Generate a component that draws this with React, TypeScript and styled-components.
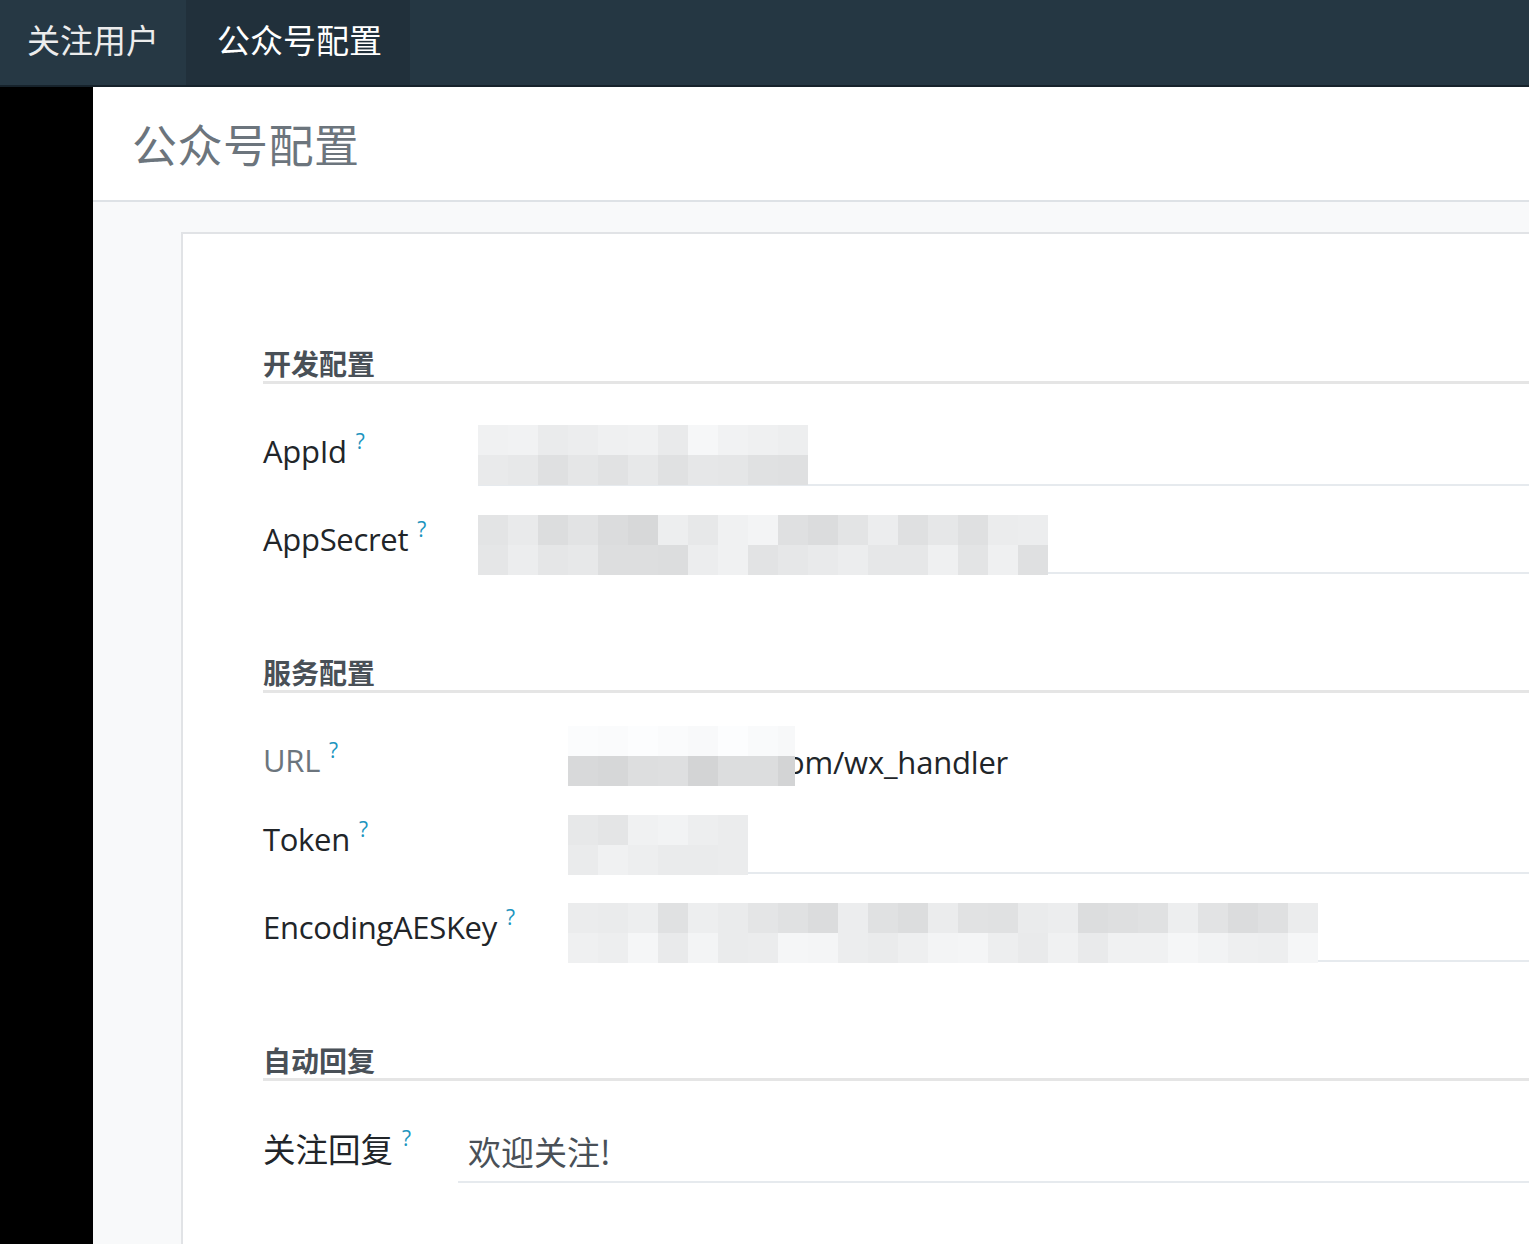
import React from "react";
import styled, { createGlobalStyle } from "styled-components";

const GlobalStyle = createGlobalStyle`
  html, body {
    margin: 0;
    padding: 0;
    overflow: hidden;
    background: #000;
  }
  body {
    font-family: "Open Sans", "Noto Sans CJK SC", sans-serif;
  }
  * { box-sizing: border-box; }
`;

const Page = styled.div`
  width: 1529px;
  height: 1244px;
  display: flex;
  flex-direction: column;
  overflow: hidden;
`;

const NavBar = styled.nav`
  height: 87px;
  flex: none;
  display: flex;
  background: #253743;
  border-bottom: 2px solid #16222b;
`;

const NavItem = styled.div<{ $active?: boolean }>`
  display: flex;
  align-items: center;
  padding: 0 ${(p) => (p.$active ? "28px" : "27px")} 8px
    ${(p) => (p.$active ? "31px" : "27px")};
  background: ${(p) => (p.$active ? "#21303b" : "#263844")};
  color: ${(p) => (p.$active ? "#ffffff" : "#ececec")};
  font-family: "Noto Sans CJK SC", sans-serif;
  font-size: 33px;
`;

const Body = styled.div`
  flex: 1;
  display: flex;
  min-height: 0;
`;

const Sidebar = styled.aside`
  width: 93px;
  flex: none;
  background: #000;
`;

const Main = styled.main`
  flex: 1;
  display: flex;
  flex-direction: column;
  background: #f8f9fa;
  min-width: 0;
`;

const Header = styled.header`
  height: 115px;
  flex: none;
  background: #fff;
  border-bottom: 2px solid #dee2e6;
  display: flex;
  align-items: center;
  padding: 0 0 0 39px;
`;

const Title = styled.h1`
  margin: 0;
  font-family: "Noto Sans CJK SC", sans-serif;
  font-weight: 400;
  font-size: 45px;
  color: #6c757d;
  letter-spacing: 0.5px;
`;

const Content = styled.div`
  flex: 1;
  padding: 30px 0 0 88px;
`;

const Card = styled.div`
  background: #fff;
  border: 2px solid #e1e3e6;
  margin-right: -60px;
  height: 1100px;
  padding: 111px 0 0 80px;
  display: flex;
  flex-direction: column;
`;

const Section = styled.section<{ $top: number }>`
  margin-top: ${(p) => p.$top}px;
  display: flex;
  flex-direction: column;
  gap: 26px;
`;

const SectionTitle = styled.h2`
  margin: 0 0 14px;
  height: 39px;
  line-height: 36px;
  font-family: "Noto Sans CJK SC", sans-serif;
  font-weight: 700;
  font-size: 28px;
  color: #495057;
  border-bottom: 3px solid #e5e5e5;
`;

const Row = styled.div<{ $label: number; $height?: number; $pull?: number }>`
  display: grid;
  grid-template-columns: ${(p) => p.$label}px 1fr;
  height: ${(p) => p.$height ?? 62}px;
  margin-top: ${(p) => -(p.$pull ?? 0)}px;
  align-items: center;
`;

const Label = styled.label<{ $muted?: boolean; $shift?: number; $cjk?: boolean }>`
  display: flex;
  align-items: flex-start;
  font-family: ${(p) =>
    p.$cjk ? `"Noto Sans CJK SC", sans-serif` : `"Open Sans", "Noto Sans CJK SC", sans-serif`};
  font-size: ${(p) => (p.$cjk ? 32.5 : 31)}px;
  color: ${(p) => (p.$muted ? "#6c757d" : "#212529")};
  line-height: 40px;
  letter-spacing: ${(p) => (p.$cjk ? "0" : "-0.3px")};
  white-space: nowrap;
  ${(p) =>
    (p.$shift ?? -4) < 0
      ? `padding-bottom: ${-2 * (p.$shift ?? -4)}px;`
      : `padding-top: ${2 * (p.$shift ?? 0)}px;`}
`;

const Help = styled.span`
  font-family: "Open Sans", sans-serif;
  font-size: 21px;
  line-height: 21px;
  color: #1b94be;
  margin-left: 9px;
  letter-spacing: 0;
`;

const InputBox = styled.div<{ $pad?: number }>`
  height: 62px;
  border-bottom: 2px solid #e6eaee;
  display: flex;
  align-items: center;
  padding-left: ${(p) => p.$pad ?? 0}px;
  font-family: "Noto Sans CJK SC", sans-serif;
  font-size: 33px;
  color: #495057;
`;

const Plain = styled.div`
  display: flex;
  align-items: flex-start;
  height: 100%;
`;

const PlainText = styled.span`
  font-family: "Open Sans", sans-serif;
  font-size: 31px;
  color: #212529;
  letter-spacing: -0.2px;
  margin-left: -9px;
  line-height: 52px;
  padding-top: 10px;
`;

const MosaicWrap = styled.span<{ $drop: number }>`
  display: inline-flex;
  position: relative;
  z-index: 1;
  margin-top: ${(p) => p.$drop * 2}px;
`;

function rand(seed: number) {
  let s = seed;
  return () => {
    s = (s * 9301 + 49297) % 233280;
    return s / 233280;
  };
}

function Mosaic({
  cols,
  seed,
  top,
  bottom,
  width,
  drop = 0,
}: {
  cols: number;
  seed: number;
  top: [number, number];
  bottom: [number, number];
  width?: number;
  drop?: number;
}) {
  const r = rand(seed);
  const cells: React.ReactNode[] = [];
  for (let row = 0; row < 2; row++) {
    const [lo, hi] = row === 0 ? top : bottom;
    for (let c = 0; c < cols; c++) {
      const v = Math.round(lo + (hi - lo) * r());
      const b = Math.min(255, v + 2);
      cells.push(
        <rect
          key={`${row}-${c}`}
          x={c * 30}
          y={row * 30}
          width={30}
          height={30}
          fill={`rgb(${v},${v + 1},${b})`}
        />
      );
    }
  }
  const w = width ?? cols * 30;
  return (
    <MosaicWrap $drop={drop}>
      <svg width={w} height={60} viewBox={`0 0 ${w} 60`}>
        {cells}
      </svg>
    </MosaicWrap>
  );
}

export default function App() {
  return (
    <Page>
      <GlobalStyle />
      <NavBar>
        <NavItem>关注用户</NavItem>
        <NavItem $active>公众号配置</NavItem>
      </NavBar>
      <Body>
        <Sidebar />
        <Main>
          <Header>
            <Title>公众号配置</Title>
          </Header>
          <Content>
            <Card>
              <Section $top={0}>
                <SectionTitle>开发配置</SectionTitle>
                <Row $label={215}>
                  <Label>
                    AppId<Help>?</Help>
                  </Label>
                  <InputBox>
                    <Mosaic cols={11} seed={7} drop={1} top={[232, 248]} bottom={[222, 236]} />
                  </InputBox>
                </Row>
                <Row $label={215}>
                  <Label>
                    AppSecret<Help>?</Help>
                  </Label>
                  <InputBox>
                    <Mosaic cols={19} seed={31} drop={3} top={[214, 244]} bottom={[220, 240]} />
                  </InputBox>
                </Row>
              </Section>

              <Section $top={80}>
                <SectionTitle>服务配置</SectionTitle>
                <Row $label={305} $height={60} $pull={7}>
                  <Label $muted $shift={3}>
                    URL<Help>?</Help>
                  </Label>
                  <Plain>
                    <Mosaic
                      cols={8}
                      width={227}
                      seed={13}
                      top={[247, 253]}
                      bottom={[210, 224]}
                    />
                    <PlainText>om/wx_handler</PlainText>
                  </Plain>
                </Row>
                <Row $label={305}>
                  <Label>
                    Token<Help>?</Help>
                  </Label>
                  <InputBox>
                    <Mosaic cols={6} seed={57} drop={3} top={[220, 242]} bottom={[228, 240]} />
                  </InputBox>
                </Row>
                <Row $label={305}>
                  <Label>
                    EncodingAESKey<Help>?</Help>
                  </Label>
                  <InputBox>
                    <Mosaic cols={25} seed={91} drop={3} top={[218, 238]} bottom={[232, 246]} />
                  </InputBox>
                </Row>
              </Section>

              <Section $top={80}>
                <SectionTitle>自动回复</SectionTitle>
                <Row $label={195}>
                  <Label $cjk>
                    关注回复<Help>?</Help>
                  </Label>
                  <InputBox $pad={10}>欢迎关注!</InputBox>
                </Row>
              </Section>
            </Card>
          </Content>
        </Main>
      </Body>
    </Page>
  );
}
